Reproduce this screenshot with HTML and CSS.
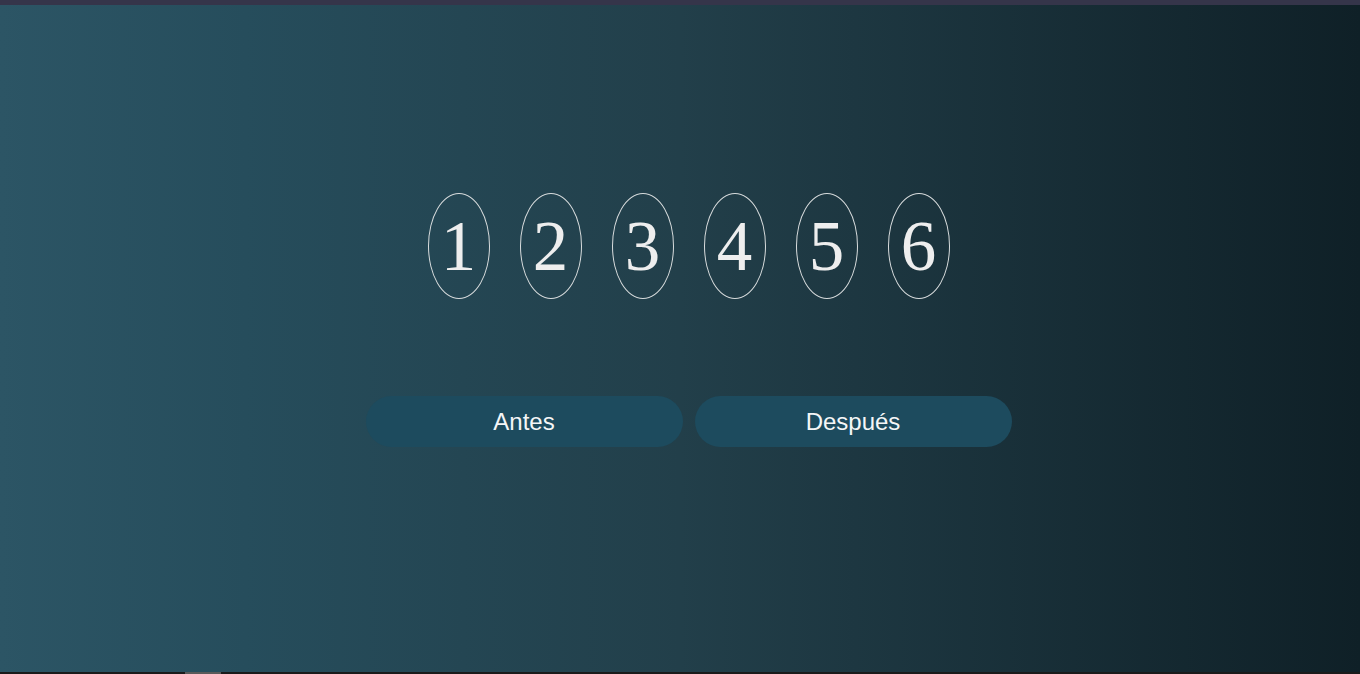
FILE: index.html
```html
<!DOCTYPE html>
<html lang="es">
<head>
<meta charset="utf-8">
<title>Antes y Después</title>
<link rel="stylesheet" href="styles.css">
</head>
<body>
<div class="topbar"></div>
<main class="stage">
  <div class="digits">
    <div class="oval">1</div>
    <div class="oval">2</div>
    <div class="oval">3</div>
    <div class="oval">4</div>
    <div class="oval">5</div>
    <div class="oval">6</div>
  </div>
  <div class="actions">
    <button class="btn">Antes</button>
    <button class="btn">Después</button>
  </div>
</main>
<div class="scrollbar"><div class="thumb"></div></div>
</body>
</html>
```
FILE: styles.css
```css
html, body {
  margin: 0;
  padding: 0;
  height: 674px;
  overflow: hidden;
}
body {
  display: flex;
  flex-direction: column;
  background: linear-gradient(to right, #2c5565 0%, #264d5c 18%, #223f4a 50%, #0f2027 100%);
  font-family: "Liberation Sans", Arial, sans-serif;
}
.topbar {
  height: 5px;
  background: #35354a;
  flex: none;
}
.stage {
  flex: 1;
  display: flex;
  flex-direction: column;
  align-items: center;
  padding-top: 188px;
  padding-left: 17px;
  gap: 97px;
}
.digits {
  display: flex;
  gap: 30px;
}
.oval {
  width: 60px;
  height: 104px;
  border: 1px solid #d8dcdd;
  border-radius: 50%;
  display: flex;
  align-items: center;
  justify-content: center;
  font-family: "Liberation Serif", "Times New Roman", serif;
  font-size: 71px;
  line-height: 1;
  color: #eeeeee;
}
.actions {
  display: flex;
  gap: 12px;
}
.btn {
  width: 317px;
  height: 51px;
  border: none;
  border-radius: 26px;
  background: #1d4b5e;
  color: #f4f6f7;
  font-family: "Liberation Sans", Arial, sans-serif;
  font-size: 24px;
  padding: 0;
}
.scrollbar {
  height: 2px;
  background: #1b1b1b;
  flex: none;
  position: relative;
}
.thumb {
  position: absolute;
  left: 185px;
  width: 36px;
  top: 0;
  height: 2px;
  background: #5a5a5a;
}
```
